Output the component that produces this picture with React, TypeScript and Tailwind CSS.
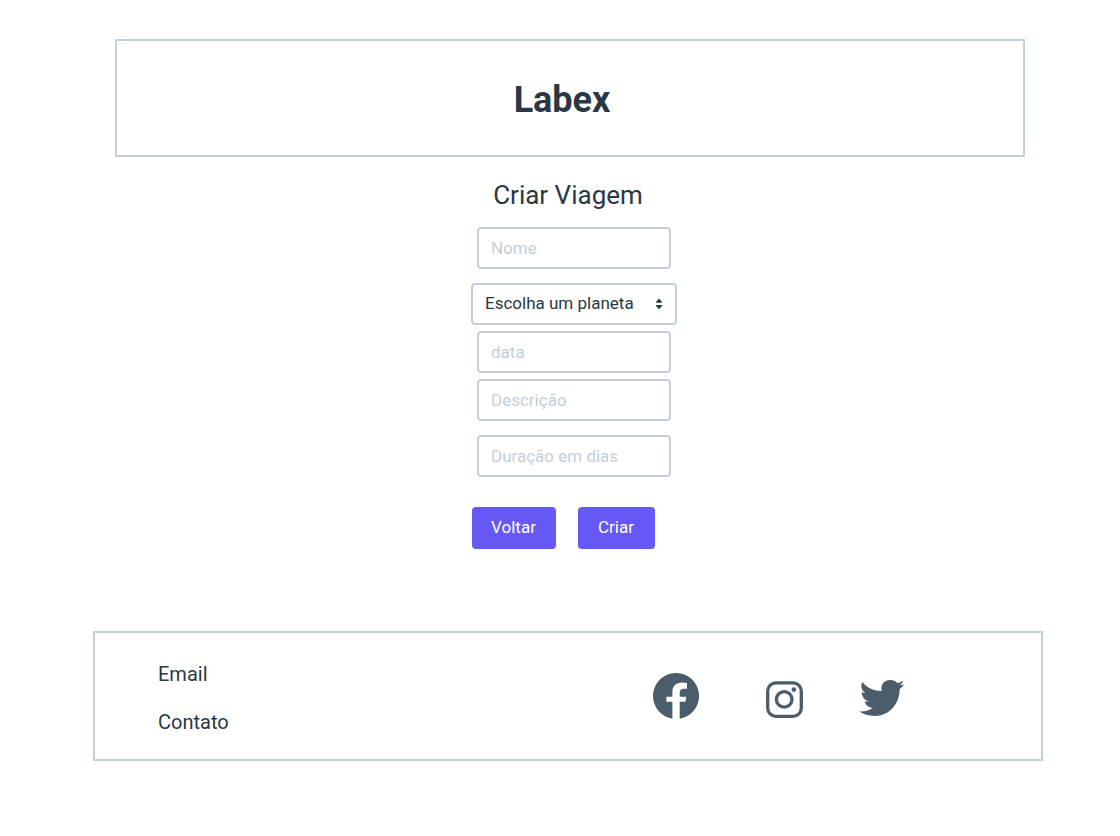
const fieldClass =
  'h-[42px] w-[194px] rounded border-2 border-[#c3ceda] bg-white px-3 text-[17px] text-[#293845] placeholder:text-[#c3cfd9] outline-none focus:border-[#6558f5]';
const buttonClass = 'h-[42px] rounded bg-[#6558f5] text-[17px] text-white';

function Field({ label, name }: { label: string; name: string }) {
  return <input className={fieldClass} type="text" name={name} placeholder={label} aria-label={label} />;
}

function FacebookIcon() {
  return (
    <svg className="size-[46px]" viewBox="0 0 46 46" fill="currentColor" aria-hidden="true">
      <path d="M19.4 45.7A23 23 0 1 1 26.7 45.7V28.7H32.4L33.3 23.7H26.7V20C26.7 17 28.2 15.7 31 15.7H34V9.9C32.2 9.6 30.8 9.4 29 9.4C23 9.4 19.4 13 19.4 18.8V23.7H13.4V28.7H19.4Z" />
    </svg>
  );
}

function InstagramIcon() {
  return (
    <svg className="size-[37px]" viewBox="0 0 37 37" fill="none" stroke="currentColor" strokeWidth="3.3" aria-hidden="true">
      <rect x="1.7" y="1.9" width="33.6" height="33.4" rx="8.2" />
      <circle cx="18.2" cy="18.4" r="7.8" />
      <circle cx="27.8" cy="8.6" r="2.3" fill="currentColor" stroke="none" />
    </svg>
  );
}

function TwitterIcon() {
  return (
    <svg className="h-9 w-[45px]" viewBox="27 30 135 108" fill="currentColor" aria-hidden="true">
      <path d="M37 36C51 54 72 63 95 63C91 44 103 30 121 30C130 30 137 34 142 39C149 38 154 35 160 32C158 38 154 42 149 46C154 46 158 45 162 43C159 49 154 54 149 57C149 101 119 138 74 138C56 138 40 133 27 124C43 126 57 122 68 114C56 113 47 106 44 94C48 95 52 95 56 94C43 90 35 79 35 66C39 68 43 69 47 70C34 61 31 48 37 36Z" />
    </svg>
  );
}

function TripForm() {
  return (
    <form className="flex flex-col items-center pl-3" onSubmit={(e) => e.preventDefault()}>
      <Field label="Nome" name="nome" />
      <div className="mt-3.5 grid items-center">
        <select
          aria-label="Escolha um planeta"
          className="col-start-1 row-start-1 h-[42px] w-[206px] appearance-none rounded border-2 border-[#c3ceda] bg-white pl-3 text-[17px] text-[#293845]"
        >
          <option>Escolha um planeta</option>
        </select>
        <svg
          className="pointer-events-none col-start-1 row-start-1 mr-3.5 h-3 w-2 justify-self-end"
          viewBox="0 0 8 12"
          fill="#293845"
          aria-hidden="true"
        >
          <path d="M4 .6 7 3.9Q7.3 4.7 6.5 4.7h-5Q.7 4.7 1 3.9ZM4 11.2 7 7.9Q7.3 7.1 6.5 7.1h-5Q.7 7.1 1 7.9Z" />
        </svg>
      </div>
      <div className="mt-1.5 flex flex-col gap-1.5">
        <Field label="data" name="data" />
        <Field label="Descrição" name="descricao" />
      </div>
      <div className="mt-3.5 flex">
        <Field label="Duração em dias" name="duracao" />
      </div>
      <div className="mt-[30px] flex gap-[22px] pr-[22px]">
        <button type="button" className={`${buttonClass} w-[84px]`}>Voltar</button>
        <button type="submit" className={`${buttonClass} w-[77px]`}>Criar</button>
      </div>
    </form>
  );
}

export default function App() {
  return (
    <div className="bg-white pt-[39px] pb-[75px] pl-4 font-['Roboto',sans-serif] text-[#293845]">
      <header className="mx-auto flex max-w-[914px] pl-1">
        <div className="flex h-[118px] flex-1 items-center justify-center border-2 border-[#c3cfd9] pt-1 pr-4">
          <h1 className="text-4xl font-bold">Labex</h1>
        </div>
      </header>
      <main>
        <h2 className="mt-[22px] mb-4 text-center text-[26px] leading-8">Criar Viagem</h2>
        <TripForm />
      </main>
      <footer className="mx-auto mt-[82px] flex h-[130px] max-w-[950px] items-center justify-between border-2 border-[#c3cfd9] pr-[137px] pl-[63px]">
        <nav className="flex flex-col gap-5 pt-1 text-xl leading-7">
          <a href="#email">Email</a>
          <a href="#contato">Contato</a>
        </nav>
        <div className="flex items-center text-[#4b5c6b]">
          <a href="#facebook" aria-label="Facebook"><FacebookIcon /></a>
          <a href="#instagram" aria-label="Instagram" className="ml-[67px] pt-1.5"><InstagramIcon /></a>
          <a href="#twitter" aria-label="Twitter" className="ml-[56px] pt-1"><TwitterIcon /></a>
        </div>
      </footer>
    </div>
  );
}
